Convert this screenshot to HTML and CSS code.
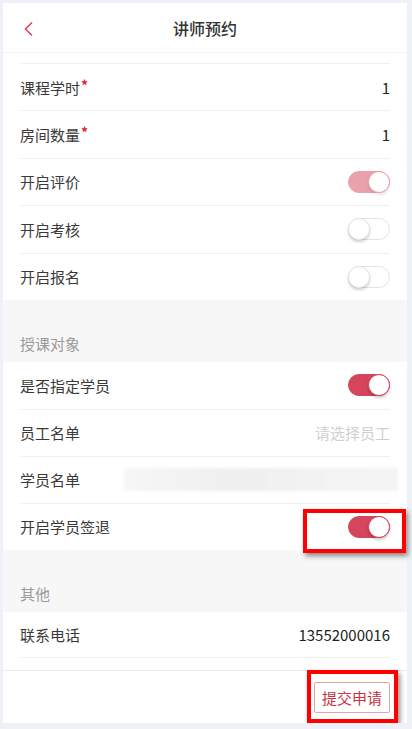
FILE: index.html
```html
<!DOCTYPE html>
<html>
<head>
    <meta charset="utf-8">
    <title>讲师预约</title>
    <link rel="stylesheet" href="styles.css">
</head>
<body>
    <div class="app">
        <header class="topBar">
            <svg class="back" width="12" height="16" viewBox="0 0 12 16">
                <path d="M9 1.5 L2.5 8 L9 14.5" fill="none" stroke="#d6455e" stroke-width="1.6"/>
            </svg>
            <h1>讲师预约</h1>
        </header>

        <section class="group first">
            <div class="row"><span class="label">课程学时<i class="req">*</i></span><span class="value">1</span></div>
            <div class="row"><span class="label">房间数量<i class="req">*</i></span><span class="value">1</span></div>
            <div class="row"><span class="label">开启评价</span><span class="switch on dim"></span></div>
            <div class="row"><span class="label">开启考核</span><span class="switch"></span></div>
            <div class="row"><span class="label">开启报名</span><span class="switch"></span></div>
        </section>

        <div class="groupTitle">授课对象</div>
        <section class="group second">
            <div class="row"><span class="label">是否指定学员</span><span class="switch on"></span></div>
            <div class="row"><span class="label">员工名单</span><span class="placeholder">请选择员工</span></div>
            <div class="row"><span class="label">学员名单</span><span class="blurred"></span></div>
            <div class="row mark">
                <span class="label">开启学员签退</span><span class="switch on"></span>
                <span class="note noteSwitch"></span>
            </div>
        </section>

        <div class="groupTitle">其他</div>
        <section class="group">
            <div class="row lastLine"><span class="label">联系电话</span><span class="value">13552000016</span></div>
        </section>

        <footer class="actions">
            <button class="submit">提交申请</button>
            <span class="note noteSubmit"></span>
        </footer>
    </div>
</body>
</html>
```
FILE: styles.css
```css
body {
    margin: 0;
    padding: 0;
    background-color: #eef1f7;
    font-family: "Noto Sans CJK SC", "Noto Sans", sans-serif;
    color: #333;
}

.app {
    margin: 3px 5px 0 3px;
    background-color: #fff;
    height: 720px;
    display: flex;
    flex-direction: column;
}

.topBar {
    height: 49px;
    display: flex;
    align-items: center;
    justify-content: center;
    position: relative;
    border-bottom: 1px solid #f4f4f5;
}

.topBar h1 {
    margin: 0;
    font-size: 16px;
    font-weight: 500;
    color: #333;
}

.back {
    position: absolute;
    left: 20px;
    top: 18px;
}

.group {
    padding: 0 17px;
    background-color: #fff;
}

.group.first {
    padding-top: 10px;
}

.row {
    height: 47.4px;
    box-sizing: border-box;
    display: flex;
    align-items: center;
    justify-content: space-between;
    border-top: 1px solid #efefef;
    font-size: 15px;
    position: relative;
}

.group.second .row {
    height: 47px;
}

.groupTitle + .group .row:first-child {
    border-top: none;
}

.row.lastLine {
    border-bottom: 1px solid #efefef;
    border-top: none;
    height: 46px;
}

.label {
    color: #3a3a3a;
}

.req {
    font-style: normal;
    font-weight: bold;
    color: #e0203a;
    font-size: 14px;
    position: relative;
    top: -3px;
    margin-left: 1px;
}

.value {
    color: #222;
}

.placeholder {
    color: #cfcfcf;
}

.blurred {
    width: 274px;
    height: 23px;
    margin-right: -8px;
    background: linear-gradient(90deg, #f6f6f6, #efefef 40%, #f2f2f2 70%, #f4f4f4);
    filter: blur(1.5px);
}

.groupTitle {
    height: 62px;
    box-sizing: border-box;
    background-color: #f7f7f8;
    color: #9a9a9a;
    font-size: 15px;
    padding: 0 17px 8px;
    display: flex;
    align-items: flex-end;
}

.switch {
    width: 42px;
    height: 22px;
    box-sizing: border-box;
    border: 1px solid #e4e4e4;
    border-radius: 11px;
    background-color: #fff;
    position: relative;
}

.switch::after {
    content: "";
    position: absolute;
    top: -1px;
    left: -1px;
    width: 22px;
    height: 22px;
    box-sizing: border-box;
    border-radius: 50%;
    background-color: #fff;
    border: 1px solid #e6e6e6;
    box-shadow: 0 2px 3px rgba(0, 0, 0, 0.2);
}

.switch.on {
    background-color: #d5455b;
    border-color: #d5455b;
}

.switch.on::after {
    left: auto;
    right: -1px;
    border-color: #d5455b;
}

.switch.dim {
    opacity: 0.5;
}

.actions {
    flex: 1;
    margin-top: 12px;
    border-top: 1px solid #ececec;
    display: flex;
    justify-content: flex-end;
    align-items: flex-start;
    padding: 11px 17px 0;
    position: relative;
}

.submit {
    height: 31px;
    padding: 0 7px;
    background-color: #fff;
    border: 1px solid #e4a2ab;
    border-radius: 2px;
    color: #c8323f;
    font-family: inherit;
    font-size: 15px;
}

/* red annotation frames */
.note {
    position: absolute;
    border: 4px solid #ff0000;
    box-shadow: 2px 3px 5px rgba(0, 0, 0, 0.45);
}

.noteSwitch {
    left: 283px;
    right: -16px;
    top: 5px;
    bottom: -3px;
}

.noteSubmit {
    left: 304px;
    right: 9px;
    top: -1px;
    bottom: 0;
}
```
